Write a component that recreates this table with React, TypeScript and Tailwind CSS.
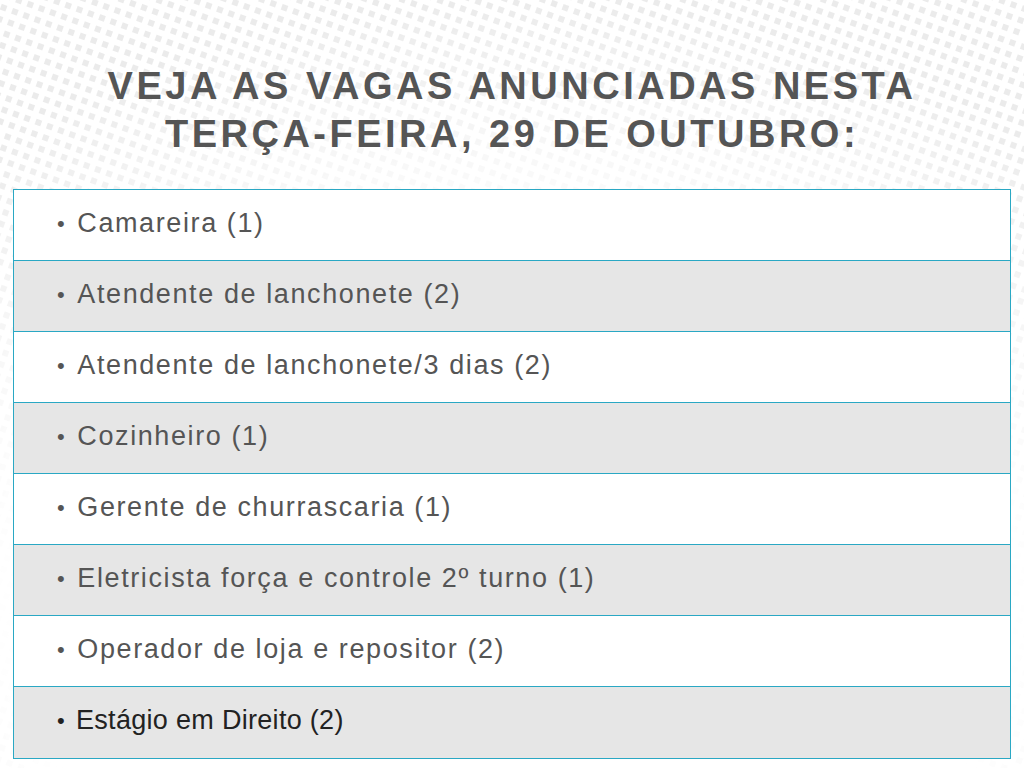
const vagas = [
  'Camareira (1)',
  'Atendente de lanchonete (2)',
  'Atendente de lanchonete/3 dias (2)',
  'Cozinheiro (1)',
  'Gerente de churrascaria (1)',
  'Eletricista força e controle 2º turno (1)',
  'Operador de loja e repositor (2)',
  'Estágio em Direito (2)',
]

// padrão de pontos ao fundo (decorativo)
function Halftone() {
  return (
    <svg className="pointer-events-none absolute inset-0 h-full w-full" viewBox="0 0 1024 768" preserveAspectRatio="none">
      <defs>
        <pattern id="dots" width="12" height="12" patternUnits="userSpaceOnUse" patternTransform="rotate(20)">
          <rect x="3" y="3" width="6" height="6" fill="#ebebeb" />
        </pattern>
        <radialGradient id="fade" cx="0.5" cy="0.8" r="0.8">
          <stop offset="0.6" stopColor="black" />
          <stop offset="1" stopColor="white" />
        </radialGradient>
        <mask id="m">
          <rect width="1024" height="768" fill="url(#fade)" />
        </mask>
      </defs>
      <rect width="1024" height="768" fill="url(#dots)" mask="url(#m)" />
    </svg>
  )
}

export default function App() {
  return (
    <div className="relative h-[768px] w-[1024px] overflow-hidden bg-white font-['Liberation_Sans',Arial,sans-serif]">
      <Halftone />
      <div className="relative flex flex-col">
        <h1 className="pt-[62px] pb-[31px] text-center text-[38px] font-bold uppercase leading-[48px] tracking-[3.5px] text-[#555555]">
          Veja as vagas anunciadas nesta
          <br />
          terça-feira, 29 de outubro:
        </h1>
        <ul className="mx-[13px] w-[998px] divide-y divide-[#2aa8c4] border border-[#2aa8c4]">
          {vagas.map((v, i) => {
            const last = i === vagas.length - 1
            return (
              <li
                key={v}
                className={`flex h-[71px] items-center pb-[4px] pl-[43px] text-[27px] ${
                  i % 2 === 1 ? 'bg-[#e6e6e6]' : 'bg-white'
                } ${last ? 'tracking-[0.3px] text-[#222222]' : 'tracking-[1.6px] text-[#555555]'}`}
              >
                <span className="mr-[11px] text-[22px]">•</span>
                {v}
              </li>
            )
          })}
        </ul>
      </div>
    </div>
  )
}
